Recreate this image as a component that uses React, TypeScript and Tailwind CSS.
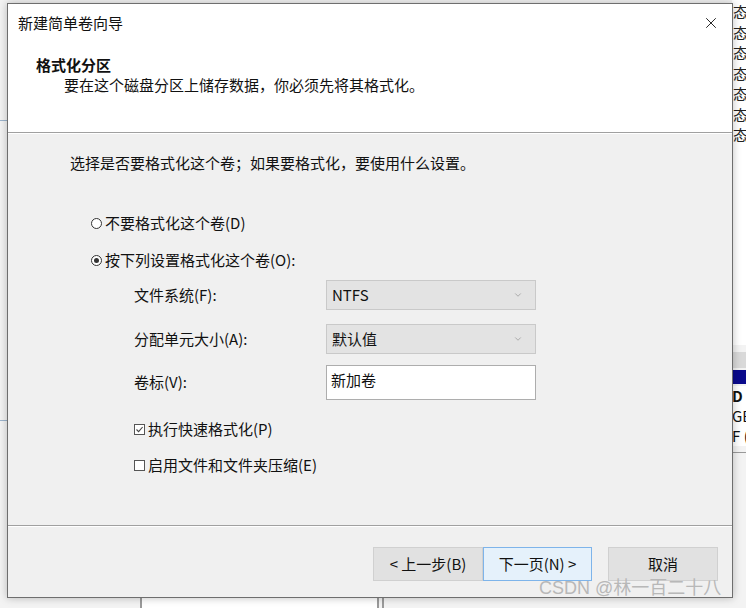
import { X, ChevronDown } from "lucide-react";

const font = { fontFamily: '"Noto Sans CJK SC", "Microsoft YaHei", sans-serif' };

function Radio({ checked }: { checked?: boolean }) {
  return (
    <span className="flex h-[11px] w-[11px] items-center justify-center rounded-full border border-[#333] bg-white">
      {checked ? <span className="h-[5px] w-[5px] rounded-full bg-[#333]" /> : null}
    </span>
  );
}

function Check({ checked }: { checked?: boolean }) {
  return (
    <span className="flex h-[11px] w-[11px] items-center justify-center border border-[#555] bg-white">
      {checked ? (
        <svg width="9" height="9" viewBox="0 0 9 9">
          <path d="M1.5 4.5 L3.6 6.6 L7.6 2" fill="none" stroke="#444" strokeWidth="1.1" />
        </svg>
      ) : null}
    </span>
  );
}

function Select({ value }: { value: string }) {
  return (
    <div className="flex h-[30px] w-[210px] items-center justify-between border border-[#c9c9c9] bg-[#e3e3e3] pl-[5px] pr-[12px] text-[15px] text-[#111]">
      <span>{value}</span>
      <ChevronDown size={10} strokeWidth={1.5} className="text-[#888]" />
    </div>
  );
}

function Background() {
  return (
    <div className="absolute inset-0 bg-[#f3f3f3]">
      {/* right strip of the disk manager window */}
      <div className="absolute right-0 top-0 flex h-[345px] w-[14px] flex-col overflow-hidden bg-white pt-[2px] text-[15px] leading-[20.5px] text-[#222]">
        {["态", "态", "态", "态", "态", "态", "态"].map((c, i) => (
          <span key={i} className="whitespace-nowrap pl-[1px]">
            {c}
          </span>
        ))}
      </div>
      <div className="absolute right-0 top-[352px] h-[16px] w-[14px] bg-[#d9d9d9]" />
      <div className="absolute right-0 top-[370px] h-[14px] w-[14px] bg-[#0a0a8c]" />
      <div className="absolute right-0 top-[386px] w-[14px] overflow-hidden whitespace-nowrap bg-white text-[15px] leading-[20px] text-[#111]">
        <div className="font-bold">D</div>
        <div>GB</div>
        <div>F (</div>
      </div>
      <div className="absolute right-0 top-[452px] h-[1px] w-[14px] bg-[#999]" />
      {/* left strip */}
      <div className="absolute left-0 top-[120px] h-[1px] w-[7px] bg-[#9cb4cc]" />
      <div className="absolute left-0 top-[420px] h-[1px] w-[7px] bg-[#9cb4cc]" />
      {/* bottom strip */}
      <div className="absolute bottom-0 left-[140px] h-[11px] w-[2px] bg-[#9a9a9a]" />
      <div className="absolute bottom-0 left-[142px] h-[11px] w-[236px] bg-white" />
      <div className="absolute bottom-0 left-[377px] h-[11px] w-[2px] bg-[#9a9a9a]" />
      <div className="absolute bottom-0 left-[382px] h-[11px] w-[2px] bg-[#9a9a9a]" />
    </div>
  );
}

export default function App() {
  return (
    <div className="relative h-[608px] w-[746px] overflow-hidden" style={font}>
      <Background />

      <div className="absolute left-[7px] top-[3px] flex h-[595px] w-[726px] flex-col border border-[#6e6e6e] bg-[#f0f0f0] shadow-[0_0_8px_rgba(0,0,0,0.25)]">
        {/* title bar + header */}
        <div className="flex h-[128px] flex-col bg-white">
          <div className="flex h-[38px] items-center justify-between pl-[10px] pr-[12px]">
            <span className="text-[15px] text-[#111]">新建简单卷向导</span>
            <X size={18} strokeWidth={1.2} className="text-[#111]" />
          </div>
          <div className="pl-[28px] pt-[13px]">
            <div className="text-[15px] font-bold leading-[20px] text-[#111]">格式化分区</div>
            <div className="pl-[28px] text-[15px] leading-[20px] text-[#111]">
              要在这个磁盘分区上储存数据，你必须先将其格式化。
            </div>
          </div>
        </div>
        <div className="h-[2px] border-t border-[#a0a0a0] bg-white" />

        {/* body */}
        <div className="flex flex-1 flex-col text-[15px] text-[#111]">
          <div className="pl-[62px] pt-[19px] leading-[20px]">
            选择是否要格式化这个卷；如果要格式化，要使用什么设置。
          </div>

          <div className="mt-[40px] flex items-center gap-[3px] pl-[83px] leading-[20px]">
            <Radio />
            <span>不要格式化这个卷(D)</span>
          </div>
          <div className="mt-[17px] flex items-center gap-[3px] pl-[83px] leading-[20px]">
            <Radio checked />
            <span>按下列设置格式化这个卷(O):</span>
          </div>

          <div className="mt-[10px] grid grid-cols-[192px_210px] gap-y-[14px] pl-[126px]">
            <span className="self-center">文件系统(F):</span>
            <Select value="NTFS" />
            <span className="self-center">分配单元大小(A):</span>
            <Select value="默认值" />
            <span className="mt-[4px] leading-[20px]">卷标(V):</span>
            <div className="-mt-[3px] h-[35px] w-[210px] border border-[#adadad] bg-white pl-[4px] pt-[4px] text-[15px] leading-[20px]">
              新加卷
            </div>
          </div>

          <div className="mt-[19px] flex items-center gap-[3px] pl-[126px] leading-[20px]">
            <Check checked />
            <span>执行快速格式化(P)</span>
          </div>
          <div className="mt-[16px] flex items-center gap-[3px] pl-[126px] leading-[20px]">
            <Check />
            <span>启用文件和文件夹压缩(E)</span>
          </div>
        </div>

        {/* footer */}
        <div className="h-[2px] border-t border-[#a0a0a0] bg-white" />
        <div className="flex h-[70px] items-start pl-[365px] pt-[20px] text-[15px] text-[#111]">
          <button className="h-[34px] w-[110px] border border-[#d0d0d0] bg-[#e1e1e1]">&lt; 上一步(B)</button>
          <button className="h-[34px] w-[109px] border border-[#7eb4ea] bg-[#e5f1fb]">下一页(N) &gt;</button>
          <button className="ml-[16px] h-[34px] w-[110px] border border-[#d0d0d0] bg-[#e1e1e1]">取消</button>
        </div>
      </div>

      <div
        className="absolute left-[539px] top-[577px] whitespace-nowrap text-[18px] leading-[22px] text-[#b8b8b8]"
        style={{ fontFamily: '"Liberation Sans", "Noto Sans CJK SC", sans-serif' }}
      >
        CSDN @林一百二十八
      </div>
    </div>
  );
}
